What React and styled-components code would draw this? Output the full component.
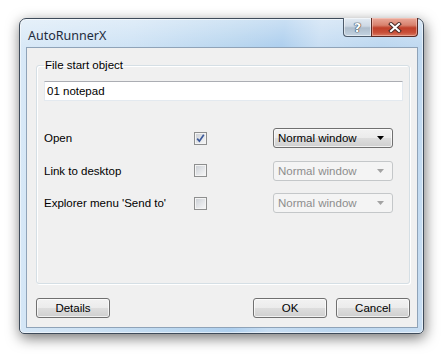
import styled, { createGlobalStyle } from 'styled-components';

const GlobalStyle = createGlobalStyle`
  html, body {
    margin: 0;
    padding: 0;
    background: #ffffff;
  }
  body {
    font-family: "Liberation Sans", Arial, sans-serif;
    font-size: 11.5px;
    color: #000000;
  }
`;

const rows = [
  { label: 'Open', checked: true, enabled: true },
  { label: 'Link to desktop', checked: false, enabled: false },
  { label: "Explorer menu 'Send to'", checked: false, enabled: false },
];

export default function App() {
  return (
    <>
      <GlobalStyle />
      <Page>
        <Window>
          <TitleBar>
            <Title>AutoRunnerX</Title>
            <CaptionButtons>
              <HelpButton>?</HelpButton>
              <CloseButton>
                <svg width="14" height="11" viewBox="0 0 14 11">
                  <path d="M3 2 L11 9 M11 2 L3 9" stroke="#4a2a26" strokeWidth="4" strokeLinecap="square" />
                  <path d="M3 2 L11 9 M11 2 L3 9" stroke="#ffffff" strokeWidth="2" strokeLinecap="square" />
                </svg>
              </CloseButton>
            </CaptionButtons>
          </TitleBar>
          <Client>
            <Group>
              <Legend>File start object</Legend>
              <TextInput defaultValue="01 notepad" />
              <OptionGrid>
                {rows.map((row) => (
                  <Row key={row.label}>
                    <RowLabel>{row.label}</RowLabel>
                    <CheckBox>
                      {row.checked && (
                        <svg width="11" height="11" viewBox="0 0 11 11">
                          <path d="M2.2 5.6 L4.4 8.2 L8.8 1.8" fill="none" stroke="#3d5a9a" strokeWidth="1.7" />
                        </svg>
                      )}
                    </CheckBox>
                    <Select disabled={!row.enabled}>
                      <span>Normal window</span>
                      <svg width="7" height="4" viewBox="0 0 7 4">
                        <path d="M0 0 H7 L3.5 4 Z" fill={row.enabled ? '#000000' : '#a3a3a3'} />
                      </svg>
                    </Select>
                  </Row>
                ))}
              </OptionGrid>
            </Group>
            <ButtonBar>
              <PushButton>Details</PushButton>
              <Spacer />
              <PushButton>OK</PushButton>
              <PushButton>Cancel</PushButton>
            </ButtonBar>
          </Client>
        </Window>
      </Page>
    </>
  );
}

const Page = styled.div`
  width: 446px;
  height: 356px;
  padding: 18px 0 0 19px;
  box-sizing: border-box;
  overflow: hidden;
`;

const Window = styled.div`
  width: 405px;
  height: 316px;
  box-sizing: border-box;
  border: 1px solid #3e4b5a;
  border-radius: 7px 7px 5px 5px;
  padding: 0 5px 5px 6px;
  display: flex;
  flex-direction: column;
  background:
    linear-gradient(180deg, rgba(255, 255, 255, 0.35) 0px, rgba(255, 255, 255, 0) 28px),
    linear-gradient(100deg, #d9e9f7 0%, #cfe3f5 25%, #b9d6ef 48%, #aecfee 58%, #c8def3 66%, #bcd7f0 80%, #c7ddf2 100%);
  box-shadow: 1px 4px 14px rgba(0, 0, 0, 0.55), inset 0 0 0 1px rgba(255, 255, 255, 0.55);
`;

const TitleBar = styled.div`
  height: 28px;
  flex: none;
  display: flex;
  justify-content: space-between;
  align-items: flex-start;
  padding-left: 2px;
`;

const Title = styled.div`
  font-family: "Noto Sans", "Open Sans", sans-serif;
  font-size: 12.5px;
  color: #1e2c3c;
  line-height: 28px;
  padding-top: 3px;
`;

const CaptionButtons = styled.div`
  display: flex;
  margin-top: -1px;
`;

const CaptionButton = styled.div`
  height: 19px;
  box-sizing: border-box;
  display: flex;
  align-items: center;
  justify-content: center;
  border: 1px solid #4d5b6b;
  border-top: none;
`;

const HelpButton = styled(CaptionButton)`
  width: 28px;
  border-right: none;
  border-radius: 0 0 0 4px;
  background: linear-gradient(180deg, #e3ebf3 0%, #cdd8e4 45%, #aebdcc 55%, #c4d3e1 100%);
  color: #ffffff;
  font-family: "DejaVu Sans", sans-serif;
  font-weight: bold;
  font-size: 13px;
  text-shadow: 0 0 1px #2f3b48, 0 0 1px #2f3b48, 0 0 1px #2f3b48;
  box-shadow: inset 0 0 0 1px rgba(255, 255, 255, 0.5);
`;

const CloseButton = styled(CaptionButton)`
  width: 47px;
  border-radius: 0 0 4px 0;
  border-color: #5a2a24;
  background: linear-gradient(180deg, #e9a99a 0%, #d8826e 40%, #c0402a 55%, #c84f38 80%, #d87a62 100%);
  box-shadow: inset 0 0 0 1px rgba(255, 220, 210, 0.45);
`;

const Client = styled.div`
  flex: 1;
  display: flex;
  flex-direction: column;
  background: #f0f0f0;
  border: 1px solid #8fa3b8;
  padding: 10px 7px 9px 9px;
`;

const Group = styled.fieldset`
  flex: 1;
  margin: 0 0 14px 0;
  padding: 9px 6px 0 7px;
  border: 1px solid #d5dfe5;
  border-radius: 3px;
  box-shadow: inset 1px 1px 0 #ffffff, 1px 1px 0 #ffffff;
  display: flex;
  flex-direction: column;
  min-width: 0;
`;

const Legend = styled.legend`
  padding: 0 1px;
  margin-left: 0;
  line-height: 14px;
  font-size: 11.5px;
`;

const TextInput = styled.input`
  height: 20px;
  box-sizing: border-box;
  width: 359px;
  border: 1px solid #e3e9ef;
  border-top-color: #abadb3;
  background: #ffffff;
  font-family: "Liberation Sans", Arial, sans-serif;
  font-size: 11.5px;
  padding: 0 2px;
  outline: none;
  color: #000000;
`;

const OptionGrid = styled.div`
  display: flex;
  flex-direction: column;
  gap: 12.5px;
  margin-top: 27px;
`;

const Row = styled.div`
  display: grid;
  grid-template-columns: 150px 79px 120px;
  align-items: center;
  height: 20px;
`;

const RowLabel = styled.div`
  font-size: 11.5px;
`;

const CheckBox = styled.div`
  width: 13px;
  height: 13px;
  box-sizing: border-box;
  border: 1px solid #8e8f8f;
  background: linear-gradient(135deg, #c9cdd3 0%, #e4e6e9 55%, #f8f8f8 100%);
  box-shadow: inset 0 0 0 1px #f4f4f4;
  display: flex;
  align-items: center;
  justify-content: center;
`;

const Select = styled.div`
  height: 20px;
  box-sizing: border-box;
  display: flex;
  align-items: center;
  justify-content: space-between;
  padding: 0 8px 0 4px;
  border: 1px solid ${(props) => (props.disabled ? '#c4c7c9' : '#707070')};
  border-radius: 3px;
  color: ${(props) => (props.disabled ? '#8d8d8d' : '#000000')};
  background: ${(props) => (props.disabled
    ? '#f4f4f4'
    : 'linear-gradient(180deg, #f2f2f2 0%, #ebebeb 50%, #dddddd 51%, #cfcfcf 100%)')};
  box-shadow: ${(props) => (props.disabled ? 'none' : 'inset 0 0 0 1px rgba(255, 255, 255, 0.7)')};
  font-size: 11.5px;
`;

const ButtonBar = styled.div`
  display: flex;
  gap: 9px;
  height: 20px;
`;

const Spacer = styled.div`
  flex: 1;
`;

const PushButton = styled.button`
  width: 74px;
  height: 20px;
  box-sizing: border-box;
  border: 1px solid #707070;
  border-radius: 3px;
  background: linear-gradient(180deg, #f2f2f2 0%, #ebebeb 50%, #dddddd 51%, #cfcfcf 100%);
  box-shadow: inset 0 0 0 1px rgba(255, 255, 255, 0.7);
  font-family: "Liberation Sans", Arial, sans-serif;
  font-size: 11.5px;
  color: #000000;
  padding: 0;
`;
